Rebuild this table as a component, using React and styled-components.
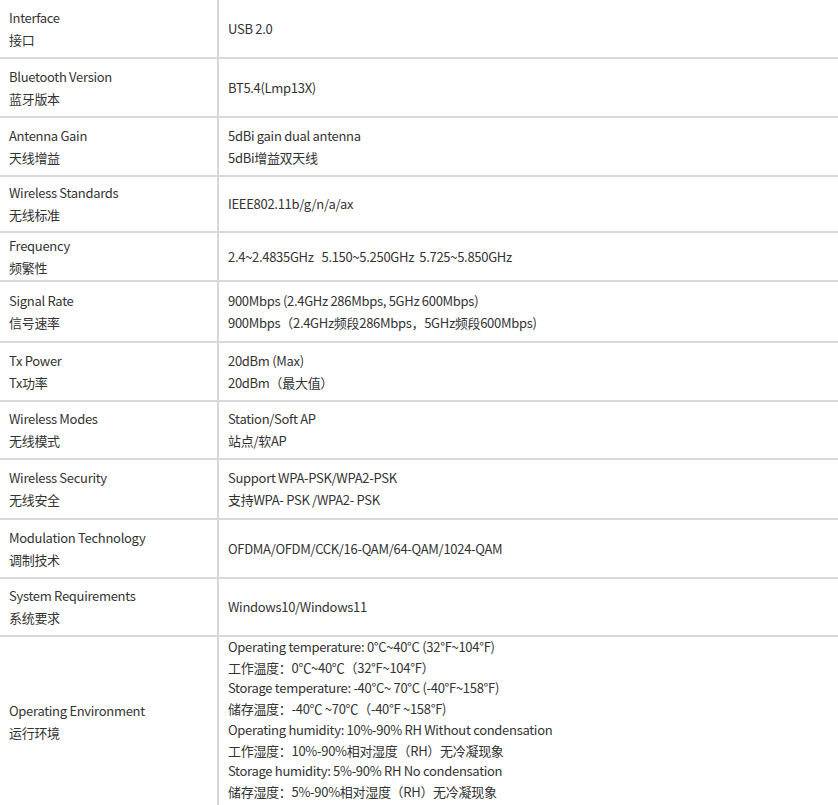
import React from 'react';
import styled, { createGlobalStyle } from 'styled-components';

const GlobalStyle = createGlobalStyle`
  html, body { margin: 0; padding: 0; background: #fff; }
  body {
    font-family: "Noto Sans CJK SC", "Noto Sans", sans-serif;
    color: #333;
  }
`;

const specs = [
  { h: 59, en: 'Interface', zh: '接口', value: ['USB 2.0'] },
  { h: 59, en: 'Bluetooth Version', zh: '蓝牙版本', value: ['BT5.4(Lmp13X)'] },
  { h: 59, en: 'Antenna Gain', zh: '天线增益', value: ['5dBi gain dual antenna', '5dBi增益双天线'] },
  { h: 56, en: 'Wireless Standards', zh: '无线标准', value: ['IEEE802.11b/g/n/a/ax'] },
  { h: 49, en: 'Frequency', zh: '频繁性', value: ['2.4~2.4835GHz   5.150~5.250GHz  5.725~5.850GHz'] },
  { h: 61, en: 'Signal Rate', zh: '信号速率', value: ['900Mbps (2.4GHz 286Mbps, 5GHz 600Mbps)', '900Mbps（2.4GHz频段286Mbps，5GHz频段600Mbps)'] },
  { h: 59, en: 'Tx Power', zh: 'Tx功率', value: ['20dBm (Max)', '20dBm（最大值）'] },
  { h: 58, en: 'Wireless Modes', zh: '无线模式', value: ['Station/Soft AP', '站点/软AP'] },
  { h: 60, en: 'Wireless Security', zh: '无线安全', value: ['Support WPA-PSK/WPA2-PSK', '支持WPA- PSK /WPA2- PSK'] },
  { h: 59, en: 'Modulation Technology', zh: '调制技术', value: ['OFDMA/OFDM/CCK/16-QAM/64-QAM/1024-QAM'] },
  { h: 58, en: 'System Requirements', zh: '系统要求', value: ['Windows10/Windows11'] },
  {
    h: 170,
    en: 'Operating Environment',
    zh: '运行环境',
    tight: true,
    value: [
      'Operating temperature: 0°C~40°C (32°F~104°F)',
      '工作温度：0℃~40℃（32°F~104°F）',
      'Storage temperature: -40°C~ 70°C (-40°F~158°F)',
      '储存温度：-40℃ ~70℃（-40°F ~158°F)',
      'Operating humidity: 10%-90% RH Without condensation',
      '工作湿度：10%-90%相对湿度（RH）无冷凝现象',
      'Storage humidity: 5%-90% RH No condensation',
      '储存湿度：5%-90%相对湿度（RH）无冷凝现象',
    ],
  },
];

function App() {
  return (
    <>
      <GlobalStyle />
      <Table>
        {specs.map((row) => (
          <Row key={row.en} $h={row.h}>
            <Label>
              <Line>{row.en}</Line>
              <Line>{row.zh}</Line>
            </Label>
            <Value $tight={row.tight}>
              {row.value.map((v) => (
                <Line key={v} $tight={row.tight}>{v}</Line>
              ))}
            </Value>
          </Row>
        ))}
      </Table>
    </>
  );
}

export default App;

const Table = styled.div`
  width: 838px;
  display: flex;
  flex-direction: column;
`;

const Row = styled.div`
  display: grid;
  grid-template-columns: 219px 1fr;
  height: ${(p) => p.$h}px;
  box-sizing: border-box;
  border-bottom: 2px solid #d9d9d9;
  &:last-child {
    border-bottom: none;
  }
`;

const Label = styled.div`
  display: flex;
  flex-direction: column;
  justify-content: center;
  padding-left: 9px;
  border-right: 2px solid #d9d9d9;
  font-size: 13px;
  letter-spacing: -0.3px;
`;

const Value = styled.div`
  display: flex;
  flex-direction: column;
  justify-content: ${(p) => (p.$tight ? 'flex-start' : 'center')};
  padding-left: 9px;
  font-size: 13px;
  letter-spacing: -0.3px;
`;

const Line = styled.div`
  line-height: ${(p) => (p.$tight ? '20.7px' : '22px')};
  white-space: pre;
`;
